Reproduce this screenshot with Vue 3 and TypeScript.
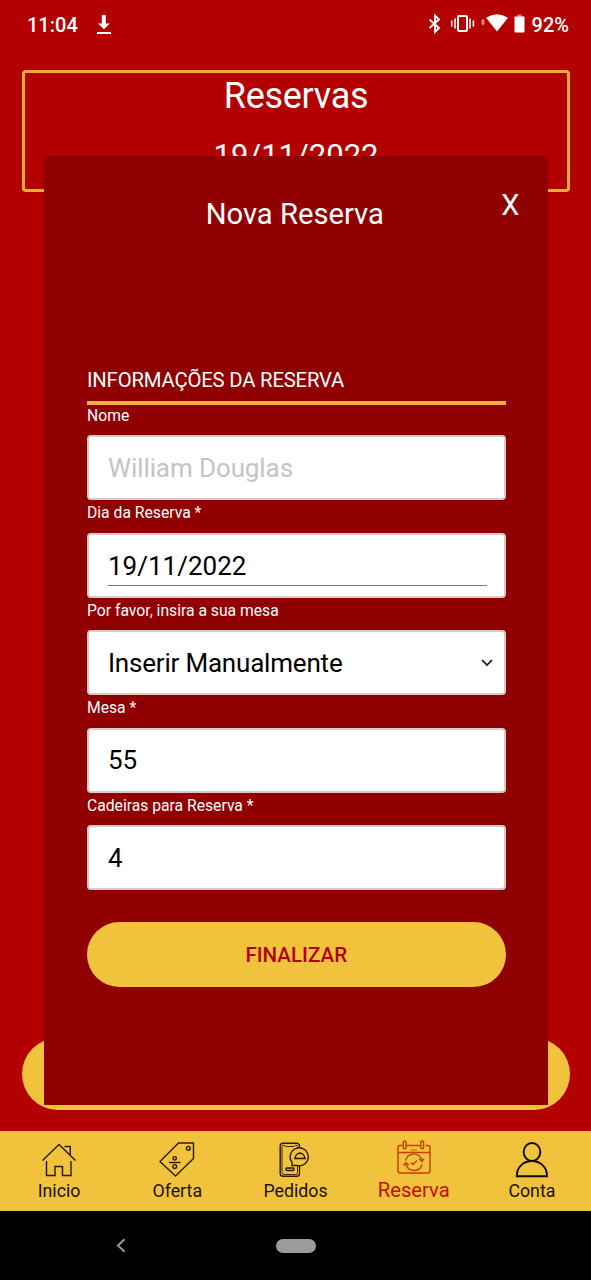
<script setup lang="ts">
import { ref } from 'vue'

interface Field {
  label: string
  value: string
  kind: 'placeholder' | 'date' | 'select' | 'text'
}

const fields: Field[] = [
  { label: 'Nome', value: 'William Douglas', kind: 'placeholder' },
  { label: 'Dia da Reserva *', value: '19/11/2022', kind: 'date' },
  { label: 'Por favor, insira a sua mesa', value: 'Inserir Manualmente', kind: 'select' },
  { label: 'Mesa *', value: '55', kind: 'text' },
  { label: 'Cadeiras para Reserva *', value: '4', kind: 'text' },
]

const tabs = ['Inicio', 'Oferta', 'Pedidos', 'Reserva', 'Conta']
const active = ref('Reserva')
</script>

<template>
  <div class="phone">
    <header class="status">
      <span class="time">11:04</span>
      <svg class="download" width="16" height="20" viewBox="0 0 16 20">
        <path d="M5.800 0h4v8.500h4L7.900 14.200 2 8.500h3.800zM1 17h14v2H1z" fill="#fff" />
      </svg>
      <svg class="indicators" width="98" height="22" viewBox="426 13 98 22">
        <path d="M428.500 19.500l9.500 8.500-4 4V15.500l4 4-9.500 8.500" fill="none" stroke="#fff" stroke-width="1.900" />
        <rect x="457" y="16" width="9" height="15" rx="1" fill="none" stroke="#fff" stroke-width="2" />
        <path d="M450.700 20.500v6M454 18.500v10M469 18.500v10M472.400 20.500v6" stroke="#fff" stroke-width="1.600" />
        <path d="M480 21.800l2-3 2 3zM480 22.500l2 3 2-3z" fill="#ffb9a8" />
        <path d="M485 17.800Q496 10.800 507 17.800L496 31.500z" fill="#fff" />
        <path d="M516 14.500h5V17h-5z" fill="#e26565" />
        <rect x="513.500" y="16.500" width="10" height="16" rx=".8" fill="#fff" />
      </svg>
      <span class="percent">92%</span>
    </header>

    <main class="page">
      <section class="summary">
        <h1>Reservas</h1>
        <p>19/11/2022</p>
      </section>
      <div class="page-button"></div>

      <section class="modal">
        <h2>Nova Reserva</h2>
        <button class="close" type="button">X</button>
        <form @submit.prevent>
          <h3>INFORMAÇÕES DA RESERVA</h3>
          <div v-for="field in fields" :key="field.label" class="field">
            <span class="label">{{ field.label }}</span>
            <div class="box" :class="field.kind">
              <span class="value">{{ field.value }}</span>
              <svg v-if="field.kind === 'select'" width="12" height="8" viewBox="0 0 12 8">
                <path d="M1 1l5 5 5-5" fill="none" stroke="#111" stroke-width="1.700" />
              </svg>
            </div>
          </div>
          <button class="submit" type="submit">FINALIZAR</button>
        </form>
      </section>
    </main>

    <nav class="tabs">
      <div v-for="tab in tabs" :key="tab" class="tab" :class="{ active: tab === active }">
        <svg v-if="tab === 'Inicio'" width="36" height="36" viewBox="0 0 36 36">
          <path d="M1.500 18.500L18 2.500l16.500 16M5.500 19v14.500h8.500v-9h7.500v9H30V19M23.500 4.500h5.800v8" />
        </svg>
        <svg v-else-if="tab === 'Oferta'" width="36" height="36" viewBox="0 0 36 36">
          <path d="M19.500 1H34.500v15.500L16.500 34 1 19.500z" stroke-linejoin="round" />
          <circle cx="29.300" cy="6.300" r="1.900" />
          <circle cx="15.700" cy="16.300" r="1.700" />
          <circle cx="15.700" cy="24.500" r="1.900" />
          <path d="M10 20.500h11.500" />
        </svg>
        <svg v-else-if="tab === 'Pedidos'" width="36" height="36" viewBox="0 0 36 36">
          <path d="M22.500 6V4q0-2.800-2.800-2.800H6Q3.200 1.200 3.200 4v27.500q0 2.800 2.800 2.800h13.700q2.800 0 2.800-2.800V23.500" />
          <path d="M20.500 7V4.500q0-1.200-1.800-1.200l-1.500 1.200H8.700L7.200 3.300Q5 3.300 5 5.300v25q0 2.200 2 2.200h11.500q2 0 2-2V23.500" stroke-width=".9" />
          <path d="M15 23.500v-3.300a9 9 0 1 1 4.500 3.200z" fill="#f1c23b" />
          <path d="M17 16.500h12M18.300 16c0-6.300 9.300-6.300 9.300 0M22.900 11v-.7" />
          <rect x="9" y="26" width="8" height="2.500" rx="1" />
        </svg>
        <svg v-else-if="tab === 'Reserva'" width="36" height="36" viewBox="0 0 36 36">
          <path d="M6.500 5.500H4Q2 5.500 2 7.500v23Q2 33 4.500 33h27Q34 33 34 30.500v-23Q34 5.500 32 5.500h-2.500M10 5.500h14M2 12.500h32" />
          <rect x="7.300" y="1" width="2.800" height="7.800" rx="1.400" />
          <rect x="24.800" y="1" width="2.800" height="7.800" rx="1.400" />
          <path d="M15 10h6" stroke-dasharray="1.200 1" />
          <path d="M9.700 20.500a8.300 8.300 0 0 1 16-.5l.3 1.500M26 24.500a8.300 8.300 0 0 1-15.800.5l-.4-2M23 19l3 2.500 2-3M7.500 25.500l2.300-2.700 3.200 2.200M15 22.500l2 2 4-4" />
        </svg>
        <svg v-else width="36" height="36" viewBox="0 0 36 36" class="bold">
          <ellipse cx="18" cy="10" rx="8.300" ry="9" />
          <path d="M2.800 34.200C2.800 14 33 14 33 34.200z" />
        </svg>
        <span>{{ tab }}</span>
      </div>
    </nav>

    <footer class="system">
      <svg width="10" height="15" viewBox="0 0 10 15">
        <path d="M8.500 1.200L2 7.500l6.500 6.300" fill="none" stroke="#999" stroke-width="2" />
      </svg>
      <i class="pill"></i>
    </footer>
  </div>
</template>

<style>
html,
body {
  margin: 0;
  background: #000;
}
</style>

<style scoped>
* {
  box-sizing: border-box;
}

.phone {
  display: grid;
  grid-template-rows: 50px 1081px 80px 69px;
  width: 591px;
  height: 1280px;
  overflow: hidden;
  font-family: Roboto, sans-serif;
  color: #fff;
  background: #b30000;
}

h1,
h2,
h3,
p {
  margin: 0;
  font-weight: 400;
}

button {
  border: 0;
  padding: 0;
  font-family: inherit;
}

.status {
  display: flex;
  align-items: flex-start;
  padding: 13px 22px 0 27px;
  font-size: 20px;
  line-height: 24px;
  font-weight: 500;
}

.download {
  margin: 2px 0 0 18px;
}

.indicators {
  margin-left: auto;
  position: relative;
  left: -1px;
}

.percent {
  margin-left: 6px;
}

.page {
  position: relative;
  display: flex;
  flex-direction: column;
  justify-content: space-between;
  padding: 20px 21px 21px 22px;
}

.summary {
  height: 122px;
  border: 3px solid #eeab35;
  border-radius: 4px;
  text-align: center;
}

.summary h1 {
  padding-top: 1px;
  font-size: 36px;
  line-height: 44px;
  letter-spacing: -0.3px;
}

.summary p {
  padding-top: 20px;
  font-size: 31px;
  line-height: 36px;
}

.page-button {
  height: 72px;
  border-radius: 36px;
  background: #f1c23b;
}

.modal {
  position: absolute;
  top: 106px;
  left: 43.500px;
  width: 504.500px;
  height: 949px;
  padding: 38px 42.500px 0 43.500px;
  background: #900000;
}

.modal h2 {
  margin-left: -3px;
  font-size: 29.200px;
  line-height: 40px;
  text-align: center;
}

.close {
  position: absolute;
  top: 32px;
  right: 28.500px;
  font-size: 29px;
  line-height: 34px;
  color: #fff;
  background: none;
}

form {
  padding-top: 130px;
}

h3 {
  height: 41px;
  border-bottom: 4px solid #f1b43a;
  font-size: 20.300px;
  line-height: 32px;
  letter-spacing: -0.180px;
}

.field {
  height: 97.600px;
}

.label {
  display: block;
  height: 30px;
  padding-top: 1.500px;
  font-size: 15.700px;
  line-height: 18px;
}

.box {
  display: flex;
  align-items: center;
  justify-content: space-between;
  height: 65px;
  padding: 0 11px 0 19px;
  border: 2px solid #d5caca;
  border-radius: 4px;
  font-size: 26px;
  color: #000;
  background: #fff;
}

.placeholder {
  color: #c4c4c4;
  letter-spacing: -0.100px;
}

.select {
  letter-spacing: -0.200px;
}

.date {
  padding-right: 17px;
}

.date .value {
  flex: 1;
  height: 41px;
  border-bottom: 1.500px solid #777;
  line-height: 42px;
}

.submit {
  width: 100%;
  height: 65px;
  margin-top: 29px;
  padding-top: 2px;
  border-radius: 33px;
  font-size: 20.600px;
  font-weight: 500;
  color: #b30000;
  background: #f1c23b;
}

.tabs {
  display: grid;
  grid-template-columns: repeat(5, 1fr);
  background: #f1c23b;
}

.tab {
  display: flex;
  flex-direction: column;
  align-items: center;
  padding-top: 11px;
  font-size: 17.800px;
  line-height: 22px;
  color: #1b1200;
}

.tab svg {
  flex: none;
  fill: none;
  stroke: #2a1c00;
  stroke-width: 1.400;
}

.tab svg.bold {
  stroke: #100b00;
  stroke-width: 1.900;
}

.tab span {
  margin-top: 2px;
}

.tab.active {
  padding-top: 9px;
  font-size: 20.200px;
  color: #c40d00;
}

.tab.active svg {
  stroke: #cb3b0c;
}

.tab.active span {
  margin-top: 3px;
}

.system {
  display: flex;
  align-items: center;
  gap: 150px;
  padding-left: 116px;
  background: #000;
}

.pill {
  width: 40px;
  height: 14px;
  border-radius: 7px;
  background: #9b9b9b;
}
</style>
